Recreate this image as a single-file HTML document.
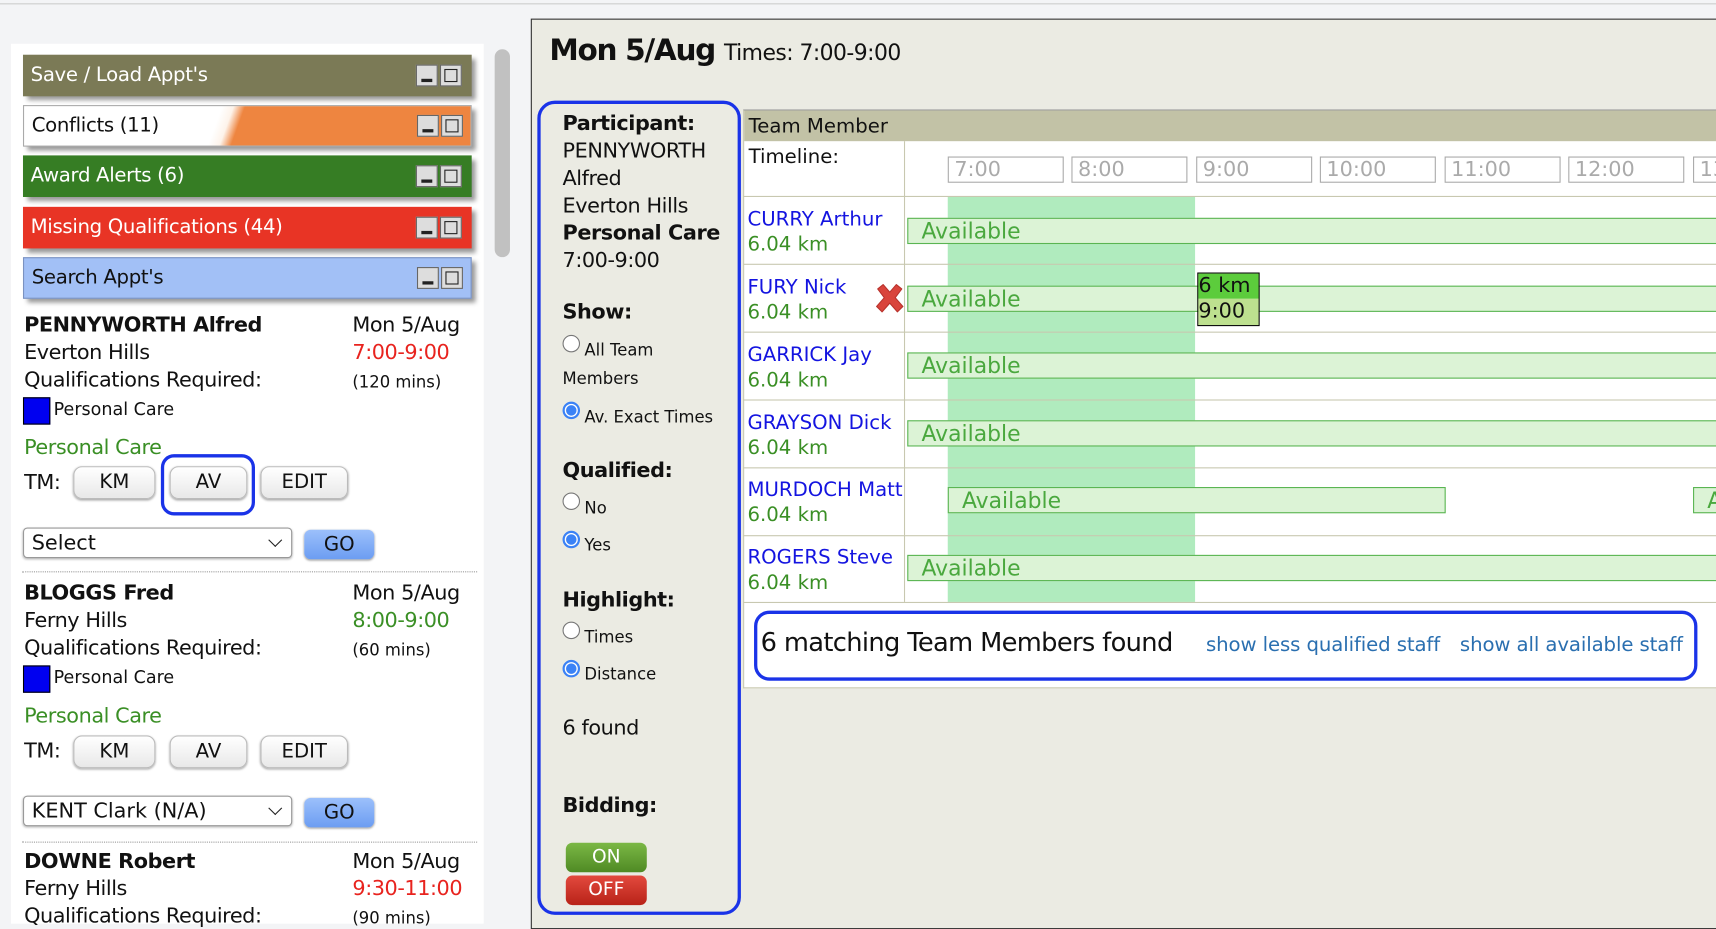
<!DOCTYPE html>
<html><head><meta charset="utf-8">
<style>
html,body{margin:0;padding:0;width:1716px;height:922px;overflow:hidden;background:#f3f4f6;}
#w{position:absolute;left:0;top:0;width:1568px;height:843px;transform:scale(1.0944);transform-origin:0 0;font-family:"DejaVu Sans","Liberation Sans",sans-serif;color:#111;}
.a{position:absolute;white-space:nowrap;}
.p{position:absolute;left:21px;width:410px;height:38px;box-shadow:4px 4px 4px #999;font-size:18px;line-height:38px;text-indent:7px;letter-spacing:-0.3px}
.ic{position:absolute;top:9px;width:18px;height:18px;border:1px solid #666;background:#ddd;}
.ic1{left:359px}.ic2{left:381px}
.ic1:after{content:"";position:absolute;left:4px;bottom:3px;width:10px;height:3px;background:#222}
.ic2:after{content:"";position:absolute;left:3px;top:3px;width:10px;height:10px;border:1px solid #222}
.t{font-size:19px;letter-spacing:-0.4px}
.btn{position:absolute;height:28px;border:1px solid #bbb;border-radius:8px;background:linear-gradient(#fff,#e8e8e8);font-size:18px;text-align:center;line-height:28px;box-shadow:0 1px 2px #aaa}
.sel{position:absolute;left:21px;width:244px;height:26px;border:1px solid #999;border-radius:4px;background:#fff;font-size:19px;line-height:26px;text-indent:7px;box-shadow:0 1px 2px #bbb}
.sel:after{content:"";position:absolute;right:10px;top:6px;width:8px;height:8px;border-right:1.5px solid #222;border-bottom:1.5px solid #222;transform:rotate(45deg)}
.go{position:absolute;left:278px;width:64px;height:27px;border-radius:6px;background:linear-gradient(#9cc0fb,#6c9df2);font-size:18px;text-align:center;line-height:27px;box-shadow:0 1px 2px #999}
.dot{position:absolute;left:20px;width:416px;border-top:1.5px dotted #999}
.r{position:absolute;width:16px;height:16px;border-radius:50%;border:1.5px solid #777;background:#fff;box-sizing:border-box}
.r.on{border:2px solid #3b82f6;background:radial-gradient(circle,#3b82f6 0 4.5px,#fff 5px)}
.m{font-size:15px}
.nm{color:#1414e0;font-size:18px}
.km{color:#3a8f25;font-size:18px}
.av{position:absolute;height:22px;background:#dcf3d6;border:1px solid #5ab552;color:#4aa83e;font-size:20px;line-height:22px;text-indent:12px;box-sizing:content-box}
.tl{position:absolute;top:142px;width:104px;height:22px;border:1px solid #aaa;color:#aaa;font-size:19px;line-height:22px;text-indent:5px;background:#fff}
.hl{position:absolute;left:679px;width:889px;border-top:1px solid #c8c8b0}
.sh{position:absolute;left:0;top:1px;width:1568px;height:843px}
</style></head><body><div id="w">
<div class="a" style="left:0;top:3px;width:1568px;border-top:1px solid #ccc"></div>
<div class="sh">
<!-- left panel -->
<div class="a" style="left:10px;top:39px;width:432px;height:804px;background:#fff"></div>
<div class="a" style="left:452px;top:44px;width:14px;height:190px;background:#c1c1c1;border-radius:7px"></div>
<div class="p" style="top:49px;background:#7b7a56;color:#fff">Save / Load Appt's<div class="ic ic1"></div><div class="ic ic2"></div></div>
<div class="p" style="top:95px;background:linear-gradient(110deg,#fff 0 170px,#fdf3ea 180px,#ee8540 190px);border:1px solid #aaa;height:36px;line-height:36px;width:408px">Conflicts (11)<div class="ic ic1" style="top:8px"></div><div class="ic ic2" style="top:8px"></div></div>
<div class="p" style="top:141px;background:#367d24;color:#fff">Award Alerts (6)<div class="ic ic1"></div><div class="ic ic2"></div></div>
<div class="p" style="top:188px;background:#e83425;color:#fff">Missing Qualifications (44)<div class="ic ic1"></div><div class="ic ic2"></div></div>
<div class="p" style="top:234px;background:#a2c0f6;border:1px solid #7b92c0;height:36px;line-height:36px;width:408px">Search Appt's<div class="ic ic1" style="top:8px"></div><div class="ic ic2" style="top:8px"></div></div>

<div class="a t" style="left:22px;top:285px;font-weight:bold">PENNYWORTH Alfred</div>
<div class="a t" style="left:322px;top:285px">Mon 5/Aug</div>
<div class="a t" style="left:22px;top:310px">Everton Hills</div>
<div class="a t" style="left:322px;top:310px;color:#e8231e">7:00-9:00</div>
<div class="a t" style="left:22px;top:335px">Qualifications Required:</div>
<div class="a m" style="left:322px;top:339px">(120 mins)</div>
<div class="a" style="left:21px;top:362px;width:23px;height:23px;background:#0000f0;border:1px solid #000"></div>
<div class="a" style="left:49px;top:363px;font-size:16px">Personal Care</div>
<div class="a t" style="left:22px;top:397px;color:#3a8f25">Personal Care</div>
<div class="a t" style="left:22px;top:429px">TM:</div>
<div class="btn" style="left:67px;top:425px;width:73px">KM</div>
<div class="btn" style="left:155px;top:425px;width:69px">AV</div>
<div class="btn" style="left:238px;top:425px;width:78px">EDIT</div>
<div class="a" style="left:147px;top:414px;width:80px;height:50px;border:3px solid #1a33e8;border-radius:12px"></div>
<div class="sel" style="top:481px">Select</div>
<div class="go" style="top:483px">GO</div>
<div class="dot" style="top:521px"></div>

<div class="a t" style="left:22px;top:530px;font-weight:bold">BLOGGS Fred</div>
<div class="a t" style="left:322px;top:530px">Mon 5/Aug</div>
<div class="a t" style="left:22px;top:555px">Ferny Hills</div>
<div class="a t" style="left:322px;top:555px;color:#3a8f25">8:00-9:00</div>
<div class="a t" style="left:22px;top:580px">Qualifications Required:</div>
<div class="a m" style="left:322px;top:584px">(60 mins)</div>
<div class="a" style="left:21px;top:607px;width:23px;height:23px;background:#0000f0;border:1px solid #000"></div>
<div class="a" style="left:49px;top:608px;font-size:16px">Personal Care</div>
<div class="a t" style="left:22px;top:642px;color:#3a8f25">Personal Care</div>
<div class="a t" style="left:22px;top:674px">TM:</div>
<div class="btn" style="left:67px;top:671px;width:73px">KM</div>
<div class="btn" style="left:155px;top:671px;width:69px">AV</div>
<div class="btn" style="left:238px;top:671px;width:78px">EDIT</div>
<div class="sel" style="top:726px">KENT Clark (N/A)</div>
<div class="go" style="top:728px">GO</div>
<div class="dot" style="top:768px"></div>
<div class="a t" style="left:22px;top:775px;font-weight:bold">DOWNE Robert</div>
<div class="a t" style="left:322px;top:775px">Mon 5/Aug</div>
<div class="a t" style="left:22px;top:800px">Ferny Hills</div>
<div class="a t" style="left:322px;top:800px;color:#e8231e">9:30-11:00</div>
<div class="a t" style="left:22px;top:825px">Qualifications Required:</div>
<div class="a m" style="left:322px;top:829px">(90 mins)</div>

<!-- main panel -->
<div class="a" style="left:485px;top:16px;width:1090px;height:830px;background:#ebebe3;border:1px solid #333"></div>
<div class="a" style="left:502px;top:30px;font-size:27px;font-weight:bold;letter-spacing:-1.2px">Mon 5/Aug <span style="font-size:20px;font-weight:normal;letter-spacing:-0.5px">Times: 7:00-9:00</span></div>
<div class="a" style="left:491px;top:91px;width:180px;height:738px;border:3px solid #1a33e8;border-radius:16px"></div>
<div class="a t" style="left:514px;top:100px;line-height:25px;white-space:normal;width:160px"><b>Participant:</b><br>PENNYWORTH<br>Alfred<br>Everton Hills<br><b>Personal Care</b><br>7:00-9:00</div>
<div class="a t" style="left:514px;top:273px;font-weight:bold">Show:</div>
<div class="r" style="left:514px;top:305px"></div><div class="a m" style="left:534px;top:310px">All Team</div>
<div class="a m" style="left:514px;top:336px">Members</div>
<div class="r on" style="left:514px;top:366px"></div><div class="a m" style="left:534px;top:371px">Av. Exact Times</div>
<div class="a t" style="left:514px;top:418px;font-weight:bold">Qualified:</div>
<div class="r" style="left:514px;top:449px"></div><div class="a m" style="left:534px;top:454px">No</div>
<div class="r on" style="left:514px;top:484px"></div><div class="a m" style="left:534px;top:488px">Yes</div>
<div class="a t" style="left:514px;top:536px;font-weight:bold">Highlight:</div>
<div class="r" style="left:514px;top:567px"></div><div class="a m" style="left:534px;top:572px">Times</div>
<div class="r on" style="left:514px;top:602px"></div><div class="a m" style="left:534px;top:606px">Distance</div>
<div class="a t" style="left:514px;top:653px">6 found</div>
<div class="a t" style="left:514px;top:724px;font-weight:bold">Bidding:</div>
<div class="a" style="left:517px;top:769px;width:74px;height:27px;border-radius:6px;background:linear-gradient(#7bb845,#4f8a24);color:#fff;font-size:17px;text-align:center;line-height:27px">ON</div>
<div class="a" style="left:517px;top:799px;width:74px;height:27px;border-radius:6px;background:linear-gradient(#e34a3e,#b82218);color:#fff;font-size:17px;text-align:center;line-height:27px">OFF</div>

<!-- table -->
<div class="a" style="left:679px;top:99px;width:889px;height:527px;background:#fff;border-top:1px solid #999;border-left:1px solid #c8c8b0;border-bottom:1px solid #c8c8b0"></div>
<div class="a" style="left:680px;top:100px;width:888px;height:28px;background:#c2c2a6"></div>
<div class="a" style="left:684px;top:104px;font-size:18px">Team Member</div>
<div class="a" style="left:684px;top:132px;font-size:18px">Timeline:</div>
<div class="a" style="left:826px;top:128px;height:421px;border-left:1px solid #c8c8b0"></div>
<div class="tl" style="left:866px">7:00</div><div class="tl" style="left:979px">8:00</div><div class="tl" style="left:1093px">9:00</div><div class="tl" style="left:1206px">10:00</div><div class="tl" style="left:1320px">11:00</div><div class="tl" style="left:1433px">12:00</div><div class="tl" style="left:1547px">13:00</div>
<div class="a" style="left:866px;top:179px;width:226px;height:370px;background:#b0ebbe"></div>
<div class="hl" style="top:178px"></div><div class="hl" style="top:240px"></div><div class="hl" style="top:302px"></div><div class="hl" style="top:364px"></div><div class="hl" style="top:426px"></div><div class="hl" style="top:488px"></div><div class="hl" style="top:549px"></div>

<div class="a nm" style="left:683px;top:189px">CURRY Arthur</div><div class="a km" style="left:683px;top:212px">6.04 km</div>
<div class="a nm" style="left:683px;top:251px">FURY Nick</div><div class="a km" style="left:683px;top:274px">6.04 km</div>
<div class="a nm" style="left:683px;top:313px">GARRICK Jay</div><div class="a km" style="left:683px;top:336px">6.04 km</div>
<div class="a nm" style="left:683px;top:375px">GRAYSON Dick</div><div class="a km" style="left:683px;top:398px">6.04 km</div>
<div class="a nm" style="left:683px;top:436px">MURDOCH Matt</div><div class="a km" style="left:683px;top:459px">6.04 km</div>
<div class="a nm" style="left:683px;top:498px">ROGERS Steve</div><div class="a km" style="left:683px;top:521px">6.04 km</div>
<svg class="a" style="left:799px;top:257px" width="28" height="29" viewBox="0 0 28 29"><path d="M3 6 L8 2 L14 9 L20 2 L25 6 L19 14 L26 22 L21 27 L14 19 L7 27 L2 22 L9 14 Z" fill="#d9443c" stroke="#b8322c" stroke-width="1" stroke-linejoin="round"/></svg>

<div class="av" style="left:829px;top:198px;width:739px">Available</div>
<div class="av" style="left:829px;top:260px;width:739px">Available</div>
<div class="av" style="left:829px;top:321px;width:739px">Available</div>
<div class="av" style="left:829px;top:383px;width:739px">Available</div>
<div class="av" style="left:866px;top:444px;width:453px">Available</div>
<div class="av" style="left:1547px;top:444px;width:30px">A</div>
<div class="av" style="left:829px;top:506px;width:739px">Available</div>
<div class="a" style="left:1094px;top:248px;width:55px;height:47px;border:1px solid #000;font-size:19px;line-height:23px">
<div style="background:#5ccc3c;height:23px">6 km</div><div style="background:#bde08f;height:24px">9:00</div></div>

<div class="a" style="left:689px;top:557px;width:856px;height:58px;border:3px solid #1a33e8;border-radius:14px;background:#fff"></div>
<div class="a" style="left:695px;top:572px;font-size:23.5px;letter-spacing:-0.6px">6 matching Team Members found</div>
<div class="a" style="left:1102px;top:578px;font-size:18px;color:#2a6fb0;letter-spacing:-0.1px">show less qualified staff</div>
<div class="a" style="left:1334px;top:578px;font-size:18px;color:#2a6fb0;letter-spacing:-0.1px">show all available staff</div>
</div>
</div></body></html>
